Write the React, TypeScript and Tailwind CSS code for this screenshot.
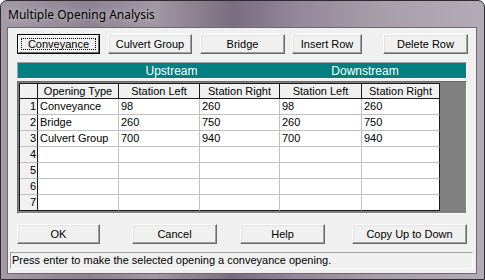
import React from "react";

const font = { fontFamily: '"Liberation Sans", Arial, sans-serif' };

function Btn({ label, w, def }: { label: string; w: string; def?: boolean }) {
  if (def) {
    return (
      <div className={`${w} h-[20px] border border-black bg-[#f0f0f0]`}>
        <div className="h-full w-full border border-t-white border-l-white border-b-[#696969] border-r-[#696969] p-[2px]">
          <div className="flex h-full w-full items-center justify-center border border-dotted border-black text-[11px] text-black">
            {label}
          </div>
        </div>
      </div>
    );
  }
  return (
    <div
      className={`${w} h-[20px] flex items-center justify-center border border-t-white border-l-white border-b-[#696969] border-r-[#696969] bg-[#f0f0f0] shadow-[inset_-1px_-1px_0_#a0a0a0,inset_1px_1px_0_#e3e3e3] text-[11px] text-black`}
    >
      {label}
    </div>
  );
}

const cols = ["w-[18px]", "w-[81px]", "w-[81px]", "w-[80px]", "w-[82px]", "w-[78px]"];
const headers = ["", "Opening Type", "Station Left", "Station Right", "Station Left", "Station Right"];
const rows: string[][] = [
  ["1", "Conveyance", "98", "260", "98", "260"],
  ["2", "Bridge", "260", "750", "260", "750"],
  ["3", "Culvert Group", "700", "940", "700", "940"],
  ["4", "", "", "", "", ""],
  ["5", "", "", "", "", ""],
  ["6", "", "", "", "", ""],
  ["7", "", "", "", "", ""],
];

export default function App() {
  return (
    <div
      className="w-[485px] h-[280px] flex flex-col overflow-hidden rounded-t-[7px] border border-[#2e2a30] bg-[linear-gradient(90deg,#a39aa7_0%,#8d8292_18%,#a096a4_32%,#7a6d7f_48%,#94889a_62%,#a89fac_80%,#b3abb6_100%)]"
      style={font}
    >
      <div className="h-[26px] flex items-center pl-[7px] pt-[2px]">
        <span
          className="text-[12px] text-black [text-shadow:0_0_6px_rgba(255,255,255,0.7)]"
          style={{ fontFamily: '"Noto Sans", "Open Sans", sans-serif' }}
        >
          Multiple Opening Analysis
        </span>
      </div>
      <div className="ml-[6px] w-[470px] h-[247px] border border-[#6e6870] bg-[#f0f0f0] flex flex-col">
        <div className="mt-[6px] ml-[9px] flex">
          <Btn label="Conveyance" w="w-[83px]" def />
          <div className="ml-[8px]"><Btn label="Culvert Group" w="w-[84px]" /></div>
          <div className="ml-[8px]"><Btn label="Bridge" w="w-[85px]" /></div>
          <div className="ml-[7px]"><Btn label="Insert Row" w="w-[70px]" /></div>
          <div className="ml-[21px]"><Btn label="Delete Row" w="w-[85px]" /></div>
        </div>
        <div className="mt-[8px] ml-[9px] w-[450px] h-[17px] border border-t-[#a0a0a0] border-l-[#a0a0a0] border-b-white border-r-white">
          <div className="h-full w-full bg-[#008080] flex items-center text-[12px] text-white">
            <div className="w-[307px] text-center">Upstream</div>
            <div className="w-[80px] text-center">Downstream</div>
          </div>
        </div>
        <div className="mt-[2px] ml-[9px] w-[450px] h-[133px] border border-t-[#696969] border-l-[#696969] border-b-white border-r-white bg-[#808080] p-[1px]">
          <div className="border-t border-l border-[#1a1a1a] w-fit bg-white">
            <div className="flex h-[15px]">
              {headers.map((h, i) => (
                <div
                  key={i}
                  className={`${cols[i]} border-r border-b border-[#1a1a1a] bg-[#f0f0f0] flex items-center justify-center text-[11px] text-black`}
                >
                  {h}
                </div>
              ))}
            </div>
            {rows.map((r, ri) => (
              <div key={ri} className="flex h-[16px]">
                {r.map((c, ci) => {
                  const last = ri === rows.length - 1;
                  const lastCol = ci === r.length - 1;
                  if (ci === 0) {
                    return (
                      <div
                        key={ci}
                        className={`${cols[ci]} border-r border-r-[#1a1a1a] border-b ${last ? "border-b-[#1a1a1a]" : "border-b-[#c0c0c0]"} bg-[#f0f0f0] flex items-center justify-end pr-[1px] text-[11px] text-black`}
                      >
                        {c}
                      </div>
                    );
                  }
                  return (
                    <div
                      key={ci}
                      className={`${cols[ci]} border-r ${lastCol ? "border-r-[#1a1a1a]" : "border-r-[#c0c0c0]"} border-b ${last ? "border-b-[#1a1a1a]" : "border-b-[#c0c0c0]"} flex items-center pl-[2px] text-[11px] text-black whitespace-nowrap`}
                    >
                      {c}
                    </div>
                  );
                })}
              </div>
            ))}
          </div>
        </div>
        <div className="mt-[10px] ml-[9px] flex">
          <Btn label="OK" w="w-[83px]" />
          <div className="ml-[32px]"><Btn label="Cancel" w="w-[85px]" /></div>
          <div className="ml-[23px]"><Btn label="Help" w="w-[85px]" /></div>
          <div className="ml-[27px]"><Btn label="Copy Up to Down" w="w-[115px]" /></div>
        </div>
        <div className="mt-[8px] ml-[2px] w-[463px] h-[17px] border border-t-[#a0a0a0] border-l-[#a0a0a0] border-b-white border-r-white flex items-center pl-[1px] text-[11px] text-black whitespace-nowrap">
          Press enter to make the selected opening a conveyance opening.
        </div>
      </div>
    </div>
  );
}
